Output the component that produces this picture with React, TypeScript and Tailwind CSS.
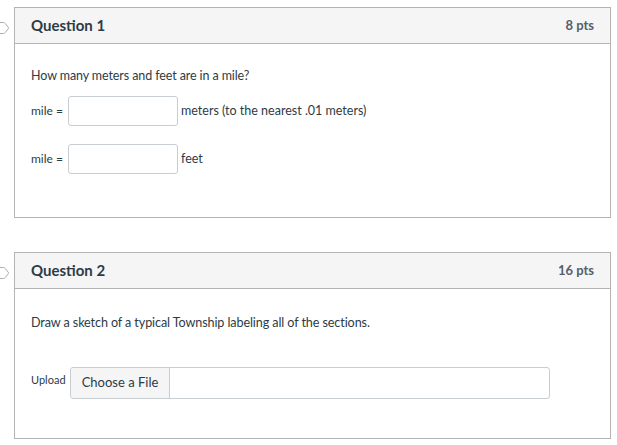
import React from "react";

function Flag() {
  return (
    <svg
      width="10"
      height="14"
      viewBox="0 0 10 14"
      className="absolute -left-[15px] top-[13px]"
    >
      <path
        d="M-4 1.5 H3.5 Q4.5 1.5 5.2 2.4 L8.3 6.3 Q8.8 7 8.3 7.7 L5.2 11.6 Q4.5 12.5 3.5 12.5 H-4"
        fill="none"
        stroke="#a9aeb2"
        strokeWidth="1"
        strokeLinejoin="round"
      />
    </svg>
  );
}

function Question({
  title,
  pts,
  children,
}: {
  title: string;
  pts: string;
  children: React.ReactNode;
}) {
  return (
    <div className="relative w-[597px] border border-[#b4b4b4] bg-white">
      <Flag />
      <div className="flex h-[36px] items-center justify-between border-b border-[#b4b4b4] bg-[#f5f5f5] pl-4 pr-4">
        <span className="text-[15px] font-bold text-[#2d3b45]">{title}</span>
        <span className="text-[13px] font-bold text-[#55606a]">{pts}</span>
      </div>
      {children}
    </div>
  );
}

export default function App() {
  return (
    <div
      className="min-h-[445px] bg-white pl-[14px] pt-[7px] text-[#2d3b45]"
      style={{ fontFamily: "Lato, 'Liberation Sans', sans-serif" }}
    >
      <Question title="Question 1" pts="8 pts">
        <div className="pl-4 pt-[24px] pb-[43px] text-[12.5px]">
          <p className="leading-[16px] tracking-[-0.1px]">How many meters and feet are in a mile?</p>
          <div className="mt-[12px] flex items-center">
            <span className="w-[37px] text-[12px]">mile =</span>
            <div className="h-[30px] w-[110px] rounded-[3px] border border-[#c7cdd1] bg-white" />
            <span className="ml-[3px] text-[12.5px]">meters (to the nearest .01 meters)</span>
          </div>
          <div className="mt-[18px] flex items-center">
            <span className="w-[37px] text-[12px]">mile =</span>
            <div className="h-[30px] w-[110px] rounded-[3px] border border-[#c7cdd1] bg-white" />
            <span className="ml-[3px] text-[12.5px]">feet</span>
          </div>
        </div>
      </Question>

      <div className="h-[34px]" />

      <Question title="Question 2" pts="16 pts">
        <div className="pl-4 pt-[26px] pb-[39px]">
          <p className="text-[12.6px] leading-[16px] tracking-[-0.1px]">
            Draw a sketch of a typical Township labeling all of the sections.
          </p>
          <div className="mt-[36px] flex items-start">
            <span className="mt-[5px] w-[39px] text-[11px]">Upload</span>
            <div className="flex h-[32px] w-[480px] rounded-[3px] border border-[#c7cdd1] bg-white">
              <div className="flex w-[99px] items-center justify-center rounded-l-[3px] border-r border-[#c7cdd1] bg-[#f5f5f5] text-[13px] text-[#2d3b45]">
                Choose a File
              </div>
            </div>
          </div>
        </div>
      </Question>
    </div>
  );
}
